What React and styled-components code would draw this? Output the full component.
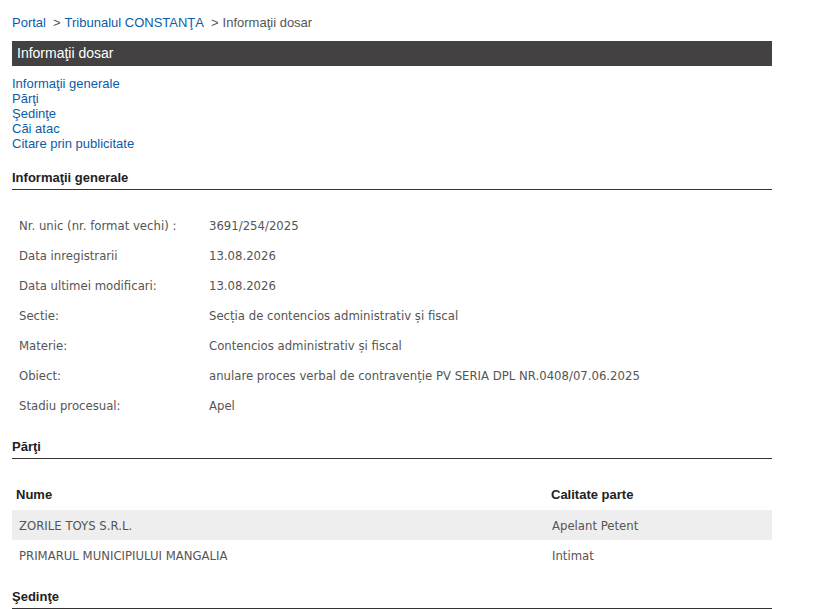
import React from "react";
import styled, { createGlobalStyle } from "styled-components";

const GlobalStyle = createGlobalStyle`
  body {
    margin: 0;
    background: #ffffff;
    font-family: "Liberation Sans", Arial, sans-serif;
  }
`;

const Page = styled.div`
  width: 760px;
  padding: 15px 0 0 12px;
`;

const Breadcrumb = styled.div`
  font-size: 13px;
  line-height: 16px;
  color: #555555;
  white-space: nowrap;
`;

const Crumb = styled.a`
  color: #0b5da8;
  text-decoration: none;
`;

const Sep = styled.span`
  margin: 0 4px 0 7px;
`;

const TitleBar = styled.div`
  margin-top: 10px;
  height: 25px;
  line-height: 25px;
  padding-left: 5px;
  background: #434142;
  color: #ffffff;
  font-size: 14px;
`;

const NavList = styled.ul`
  list-style: none;
  margin: 10px 0 0;
  padding: 0;
`;

const NavItem = styled.li`
  font-size: 13px;
  line-height: 15px;

  a {
    color: #0b5da8;
    text-decoration: none;
  }
`;

const SectionTitle = styled.h3`
  margin: ${(p) => p.$top}px 0 0;
  padding: 1px 0 3px;
  border-bottom: 1px solid #333333;
  font-size: 13px;
  line-height: 16px;
  font-weight: bold;
  color: #222222;
`;

const Details = styled.div`
  margin-top: 20px;
  display: grid;
  grid-template-columns: 190px 1fr;
  grid-auto-rows: 30px;
  font-family: "DejaVu Sans", Verdana, sans-serif;
  font-size: 11.7px;
  color: #555555;
`;

const Cell = styled.div`
  display: flex;
  align-items: center;
  padding: 2px 0 0 7px;
  white-space: nowrap;
`;

const Parties = styled.div`
  margin-top: 20px;
  display: grid;
  grid-template-columns: 533px 1fr;
`;

const HeadCell = styled.div`
  height: 31px;
  display: flex;
  align-items: center;
  padding-left: ${(p) => p.$pad}px;
  font-size: 13px;
  font-weight: bold;
  color: #222222;
`;

const PartyCell = styled.div`
  height: 30px;
  display: flex;
  align-items: center;
  padding: 2px 0 0 7px;
  box-sizing: border-box;
  background: ${(p) => (p.$odd ? "#eeeeee" : "transparent")};
  font-family: "DejaVu Sans", Verdana, sans-serif;
  font-size: 11.7px;
  color: #555555;
  white-space: nowrap;
`;

const general = [
  ["Nr. unic (nr. format vechi) :", "3691/254/2025"],
  ["Data inregistrarii", "13.08.2026"],
  ["Data ultimei modificari:", "13.08.2026"],
  ["Sectie:", "Secția de contencios administrativ și fiscal"],
  ["Materie:", "Contencios administrativ și fiscal"],
  ["Obiect:", "anulare proces verbal de contravenție PV SERIA DPL NR.0408/07.06.2025"],
  ["Stadiu procesual:", "Apel"],
];

const parties = [
  ["ZORILE TOYS S.R.L.", "Apelant Petent"],
  ["PRIMARUL MUNICIPIULUI MANGALIA", "Intimat"],
];

const links = [
  "Informaţii generale",
  "Părţi",
  "Şedinţe",
  "Căi atac",
  "Citare prin publicitate",
];

export default function App() {
  return (
    <>
      <GlobalStyle />
      <Page>
        <Breadcrumb>
          <Crumb href="#">Portal</Crumb>
          <Sep>&gt;</Sep>
          <Crumb href="#">Tribunalul CONSTANŢA</Crumb>
          <Sep>&gt;</Sep>
          Informaţii dosar
        </Breadcrumb>
        <TitleBar>Informaţii dosar</TitleBar>
        <NavList>
          {links.map((l) => (
            <NavItem key={l}>
              <a href="#">{l}</a>
            </NavItem>
          ))}
        </NavList>

        <SectionTitle $top={18}>Informaţii generale</SectionTitle>
        <Details>
          {general.map(([label, value]) => (
            <React.Fragment key={label}>
              <Cell>{label}</Cell>
              <Cell>{value}</Cell>
            </React.Fragment>
          ))}
        </Details>

        <SectionTitle $top={18}>Părţi</SectionTitle>
        <Parties>
          <HeadCell $pad={4}>Nume</HeadCell>
          <HeadCell $pad={6}>Calitate parte</HeadCell>
          {parties.map(([name, role], i) => (
            <React.Fragment key={name}>
              <PartyCell $odd={i % 2 === 0}>{name}</PartyCell>
              <PartyCell $odd={i % 2 === 0}>{role}</PartyCell>
            </React.Fragment>
          ))}
        </Parties>

        <SectionTitle $top={18}>Şedinţe</SectionTitle>
      </Page>
    </>
  );
}
